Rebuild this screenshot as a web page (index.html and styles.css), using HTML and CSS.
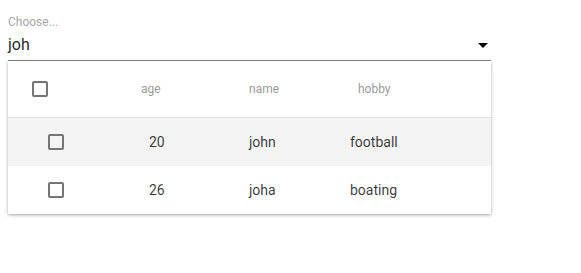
FILE: index.html
```html
<!DOCTYPE html>
<html>
<head>
<meta charset="utf-8">
<link rel="stylesheet" href="styles.css">
</head>
<body>
<div class="field">
  <div class="label">Choose...</div>
  <div class="input-row">
    <span class="value">joh</span>
    <svg class="arrow" width="10" height="5" viewBox="7 10 10 5"><path d="M7 10l5 5 5-5z" fill="#000"/></svg>
  </div>
  <div class="card">
    <div class="row head">
      <div class="cell check-cell"><span class="box"></span></div>
      <div class="cell">age</div>
      <div class="cell">name</div>
      <div class="cell">hobby</div>
    </div>
    <div class="row body alt">
      <div class="cell check-cell"><span class="box"></span></div>
      <div class="cell">20</div>
      <div class="cell">john</div>
      <div class="cell">football</div>
    </div>
    <div class="row body">
      <div class="cell check-cell"><span class="box"></span></div>
      <div class="cell">26</div>
      <div class="cell">joha</div>
      <div class="cell">boating</div>
    </div>
  </div>
</div>
</body>
</html>
```
FILE: styles.css
```css
html, body {
  margin: 0;
  padding: 0;
  background: #fff;
  font-family: Roboto, "Noto Sans", sans-serif;
}
body {
  min-height: 273px;
}
.field {
  width: 483px;
  margin-left: 8px;
  padding-top: 15px;
  padding-bottom: 30px;
}
.label {
  font-size: 12px;
  line-height: 14px;
  height: 14px;
  color: #a8a8a8;
}
.input-row {
  margin-top: 6px;
  display: flex;
  justify-content: space-between;
  align-items: flex-start;
  padding-bottom: 6px;
  border-bottom: 1px solid #858585;
}
.value {
  font-size: 16px;
  line-height: 19px;
  color: rgba(0,0,0,0.87);
}
.arrow {
  display: block;
  margin-top: 8px;
  margin-right: 3px;
}
.card {
  background: #fff;
  box-shadow: 0 1px 4px rgba(0,0,0,0.22), 0 1px 2px rgba(0,0,0,0.16);
}
.row {
  display: grid;
  align-items: center;
}
.head {
  grid-template-columns: 133px 108px 109px 1fr;
  height: 56px;
  border-bottom: 1px solid #e0e0e0;
  font-size: 12px;
  color: #9a9a9a;
}
.head .check-cell {
  padding-left: 24px;
}
.body {
  grid-template-columns: 141px 100px 101px 1fr;
  height: 48px;
  font-size: 14px;
  color: rgba(0,0,0,0.78);
}
.body .check-cell {
  padding-left: 40px;
}
.alt {
  background: #f4f4f4;
}
.check-cell {
  display: flex;
  align-items: center;
}
.box {
  display: block;
  width: 16px;
  height: 16px;
  box-sizing: border-box;
  border: 2px solid #757575;
  border-radius: 2px;
}
```
